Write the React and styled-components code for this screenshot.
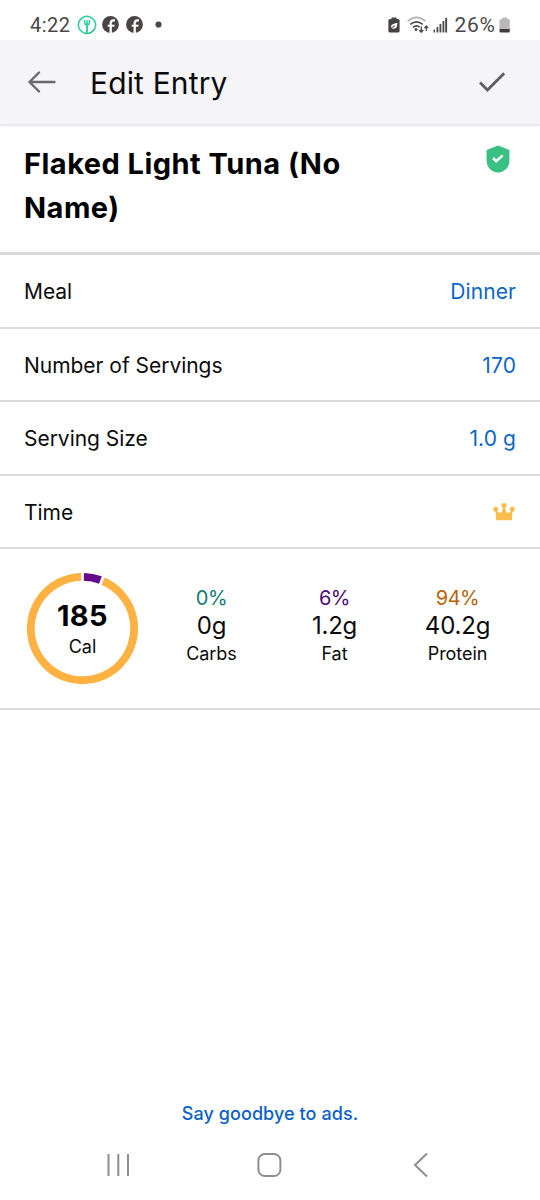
import React from 'react'
import styled, { createGlobalStyle } from 'styled-components'

const GlobalStyle = createGlobalStyle`
  * {
    box-sizing: border-box;
  }
  body {
    margin: 0;
    background-color: white;
    color: #0b0b0c;
    font-family: Inter, 'Liberation Sans', sans-serif;
  }
  svg {
    display: block;
    flex-shrink: 0;
  }
`

const Screen = styled.div`
  width: 540px;
  height: 1200px;
  display: flex;
  flex-direction: column;
  overflow: hidden;
`

const StatusBar = styled.div`
  height: 40px;
  padding: 8px 29px 0 30px;
  display: flex;
  justify-content: space-between;
  color: #4a4748;
  font-family: Roboto, sans-serif;
  font-size: 20px;
  line-height: 34px;
`

const StatusGroup = styled.div`
  display: flex;
  align-items: center;
  height: 33px;
`

const StatusText = styled.span`
  width: ${props => props.$width}px;
  font-size: ${props => props.$size || 20}px;
  letter-spacing: ${props => props.$spacing || 0}px;
  white-space: nowrap;
`

const Gap = styled.span`
  width: ${props => props.$width}px;
`

const Header = styled.header`
  height: 84px;
  padding: 0 34px 0 27px;
  display: flex;
  align-items: center;
  background-color: #f5f5f8;
  box-shadow: 0 2px 2px rgba(0, 0, 0, 0.1);
`

const HeaderTitle = styled.h1`
  flex: 1;
  margin: 2px 0 0 33px;
  font-size: 30px;
  font-weight: 400;
  line-height: 40px;
  letter-spacing: 0.15px;
`

const FoodTitle = styled.section`
  height: 131px;
  padding: 17px 29px 0 24px;
  display: flex;
  justify-content: space-between;
  border-bottom: 3px solid #d9d9dc;
`

const FoodName = styled.h2`
  width: 350px;
  margin: 1px 0 0;
  font-size: 29px;
  font-weight: 700;
  line-height: 44px;
  letter-spacing: 0.47px;
  color: #000;
`

const Shield = styled.div`
  padding-top: 4px;
`

const Row = styled.div`
  height: 73.5px;
  padding: 3px 24px 0;
  display: flex;
  align-items: center;
  justify-content: space-between;
  border-bottom: 2px solid #dcdcde;
  font-size: 21px;
  line-height: 30px;
`

const RowLabel = styled.span`
  letter-spacing: -0.03px;
`

const RowValue = styled.span`
  color: #0b66c9;
  letter-spacing: 0.1px;
`

const Nutrition = styled.section`
  height: 161px;
  padding: 23px 21px 0 26px;
  display: flex;
  border-bottom: 2px solid #dcdcde;
`

const Ring = styled.div`
  width: 113px;
  height: 113px;
  display: grid;
  margin-right: 11px;

  > * {
    grid-area: 1 / 1;
  }
`

const Calories = styled.div`
  padding-top: 26px;
  text-align: center;
`

const CalorieCount = styled.div`
  font-size: 29px;
  font-weight: 700;
  line-height: 36px;
  letter-spacing: 0.4px;
  color: #000;
`

const CalorieUnit = styled.div`
  font-size: 18px;
  line-height: 26px;
`

const Macro = styled.div`
  width: 123px;
  padding-top: 13px;
  text-align: center;
`

const MacroPercent = styled.div`
  font-size: 20px;
  line-height: 26px;
  letter-spacing: -0.5px;
  color: ${props => props.$color};
`

const MacroAmount = styled.div`
  font-size: 24px;
  line-height: 29px;
  letter-spacing: -0.2px;
`

const MacroName = styled.div`
  font-size: 18px;
  line-height: 28px;
  letter-spacing: -0.05px;
`

const AdsLink = styled.a`
  margin-top: auto;
  padding-bottom: 12px;
  text-align: center;
  font-size: 18px;
  font-weight: 500;
  line-height: 28px;
  letter-spacing: 0.07px;
  color: #0b62c6;
`

const NavBar = styled.nav`
  height: 60px;
  padding: 0 110px 10px 105px;
  display: flex;
  align-items: center;
  justify-content: space-between;
`

const rows = [
  { label: 'Meal', value: 'Dinner' },
  { label: 'Number of Servings', value: '170' },
  { label: 'Serving Size', value: '1.0 g' },
  { label: 'Time', value: <CrownIcon /> }
]

const macros = [
  { name: 'Carbs', percent: '0%', amount: '0g', color: '#127d75' },
  { name: 'Fat', percent: '6%', amount: '1.2g', color: '#4f0a76' },
  { name: 'Protein', percent: '94%', amount: '40.2g', color: '#b5650b' }
]

// point on the ring, angle in degrees clockwise from the top
function point(angle) {
  const rad = angle * Math.PI / 180
  return (56.5 + 51.7 * Math.sin(rad)) + ' ' + (56.5 - 51.7 * Math.cos(rad))
}

function arc(start, end) {
  return 'M' + point(start) + ' A51.7 51.7 0 ' + (end - start > 180 ? 1 : 0) + ' 1 ' + point(end)
}

function CrownIcon() {
  return (
    <svg width='23' height='19' viewBox='0 0 23 19' fill='#fbbe4b'>
      <circle cx='2.7' cy='6.2' r='2.5' />
      <circle cx='11' cy='2.6' r='2.5' />
      <circle cx='19.3' cy='6.2' r='2.5' />
      <path d='M2.4 7 L3.2 17.3 H18.8 L19.6 7 L18 8.3 Q16 10.5 13.8 9.4 Q12.2 8.2 12.2 4 H9.8 Q9.8 8.2 8.2 9.4 Q6 10.5 4 8.3 Z' />
    </svg>
  )
}

function ForkIcon() {
  return (
    <svg width='20' height='20' viewBox='0 0 20 20' fill='none' stroke='#2fd09b'>
      <path d='M8 18.3 A8.6 8.6 0 1 1 17.8 13.5' strokeWidth='1.6' />
      <path d='M17.8 13.5 A8.6 8.6 0 0 1 8 18.3' strokeWidth='1.6' stroke='#25b77f' />
      <path d='M10 8 V18.5' strokeWidth='1.9' />
      <path d='M7.6 5 V8 Q7.6 9.8 10 9.8 Q12.4 9.8 12.4 8 V5 M10 5 V10' strokeWidth='1.5' />
    </svg>
  )
}

function FacebookIcon() {
  return (
    <svg width='17' height='17' viewBox='0 0 17 17'>
      <circle cx='8.5' cy='8.5' r='8.4' fill='#4a4445' />
      <path d='M8.7 17 V7.2 Q8.7 4.4 11.5 4.4 H13' fill='none' stroke='white' strokeWidth='2.3' />
      <path d='M5.7 9.7 H12.4' stroke='white' strokeWidth='2' />
    </svg>
  )
}

function SaverIcon() {
  return (
    <svg width='12' height='16' viewBox='0 0 12 16'>
      <path d='M3.5 2 V.5 H8.5 V2 H10 Q11.6 2 11.6 3.6 V13.9 Q11.6 15.5 10 15.5 H2 Q.4 15.5 .4 13.9 V3.6 Q.4 2 2 2 Z' fill='#454243' />
      <path d='M9.3 5.8 Q9.8 11.8 5.5 11.7 Q2.9 11.5 3 9.2 Q3.5 6.9 9.3 5.8 Z' fill='white' />
      <path d='M2.5 12.2 Q4 9.8 7 8.7' fill='none' stroke='#454243' />
    </svg>
  )
}

function WifiIcon() {
  return (
    <svg width='22' height='18' viewBox='0 0 22 18' fill='none' strokeWidth='1.7'>
      <path d='M.7 5.2 Q9.5 -2.4 18.3 5.2' stroke='#b5b3b4' />
      <path d='M3.3 8.4 Q9.5 3.2 15.7 8.4 M6 11.4 Q9.5 8.5 12.7 11.2' stroke='#4a4748' />
      <circle cx='9' cy='13.6' r='1.5' fill='#4a4748' />
      <path d='M14.3 10.5 V16 M12.3 14 L14.3 16.2 L16.2 14 M19.3 15 V10.2 M17.4 12.1 L19.3 10 L21.2 12.1' stroke='#4a4748' strokeWidth='1.3' />
    </svg>
  )
}

function SignalIcon() {
  return (
    <svg width='15' height='16' viewBox='0 0 15 16' fill='#4a4748'>
      <rect x='.5' y='12.5' width='1.5' height='3' rx='.6' />
      <rect x='3.5' y='10' width='1.8' height='5.5' rx='.6' />
      <rect x='6.5' y='7' width='1.8' height='8.5' rx='.6' />
      <rect x='9.5' y='4' width='1.8' height='11.5' rx='.6' />
      <rect x='12.2' y='.8' width='1.9' height='14.7' rx='.6' />
    </svg>
  )
}

function BatteryIcon() {
  return (
    <svg width='12' height='16' viewBox='0 0 12 16'>
      <path d='M3.5 2 V.5 H8 V2 H9.2 Q10.8 2 10.8 3.6 V12 H.5 V3.6 Q.5 2 2 2 Z' fill='#b9b7b8' />
      <path d='M.5 12 H10.8 V13.9 Q10.8 15.4 9.2 15.4 H2 Q.5 15.4 .5 13.9 Z' fill='#3f3c3d' />
    </svg>
  )
}

function App() {
  return (
    <Screen>
      <GlobalStyle />
      <StatusBar>
        <StatusGroup>
          <StatusText $width={47} $spacing={0.5}>4:22</StatusText>
          <ForkIcon />
          <Gap $width={5} />
          <FacebookIcon />
          <Gap $width={6.5} />
          <FacebookIcon />
          <Gap $width={12.5} />
          <svg width='7' height='7'><circle cx='3.5' cy='3.5' r='3.1' fill='#4a4748' /></svg>
        </StatusGroup>
        <StatusGroup>
          <SaverIcon />
          <Gap $width={7.5} />
          <WifiIcon />
          <Gap $width={4} />
          <SignalIcon />
          <Gap $width={6.5} />
          <StatusText $width={44.5} $size={21} $spacing={0.7}>26%</StatusText>
          <BatteryIcon />
        </StatusGroup>
      </StatusBar>

      <Header>
        <svg width='30' height='24' viewBox='0 0 30 24' fill='none' stroke='#69696b' strokeWidth='2.4' strokeLinecap='round' strokeLinejoin='round'>
          <path d='M27.5 12 H2.5 M12 2.5 L2.5 12 L12 21.5' />
        </svg>
        <HeaderTitle>Edit Entry</HeaderTitle>
        <svg width='28' height='22' viewBox='0 0 28 22' fill='none' stroke='#5f5f61' strokeWidth='2.8'>
          <path d='M2 11.5 L9.5 19 L26.2 2.3' />
        </svg>
      </Header>

      <FoodTitle>
        <FoodName>Flaked Light Tuna (No Name)</FoodName>
        <Shield>
          <svg width='26' height='28' viewBox='0 0 26 28'>
            <path d='M13 .6 L24.4 5 V15.5 Q24.4 22.5 18.5 26 Q13 29 7.5 26 Q1.6 22.5 1.6 15.5 V5 Z' fill='#39c183' />
            <path d='M8 13 L11.2 16.2 L17.7 10.4' fill='none' stroke='white' strokeWidth='2.5' />
          </svg>
        </Shield>
      </FoodTitle>

      {rows.map(row => (
        <Row key={row.label}>
          <RowLabel>{row.label}</RowLabel>
          <RowValue>{row.value}</RowValue>
        </Row>
      ))}

      <Nutrition>
        <Ring>
          <svg width='113' height='113' viewBox='0 0 113 113' fill='none' strokeWidth='7.8'>
            <path d={arc(1.5, 20.3)} stroke='#650a88' />
            <path d={arc(23.5, 358.5)} stroke='#ffb142' />
          </svg>
          <Calories>
            <CalorieCount>185</CalorieCount>
            <CalorieUnit>Cal</CalorieUnit>
          </Calories>
        </Ring>
        {macros.map(macro => (
          <Macro key={macro.name}>
            <MacroPercent $color={macro.color}>{macro.percent}</MacroPercent>
            <MacroAmount>{macro.amount}</MacroAmount>
            <MacroName>{macro.name}</MacroName>
          </Macro>
        ))}
      </Nutrition>

      <AdsLink>Say goodbye to ads.</AdsLink>

      <NavBar>
        <svg width='26' height='26' viewBox='0 0 26 26' stroke='#8e8e8e' strokeWidth='2'>
          <path d='M3.5 2 V24 M13.3 2 V24 M23 2 V24' />
        </svg>
        <svg width='32' height='26' viewBox='0 0 32 26' fill='none' stroke='#8e8e8e' strokeWidth='2'>
          <rect x='2.4' y='2' width='22' height='22' rx='6.5' />
        </svg>
        <svg width='18' height='26' viewBox='0 0 18 26' fill='none' stroke='#8e8e8e' strokeWidth='2'>
          <path d='M15 1.5 L3 13 L15 24.5' />
        </svg>
      </NavBar>
    </Screen>
  )
}

export default App
